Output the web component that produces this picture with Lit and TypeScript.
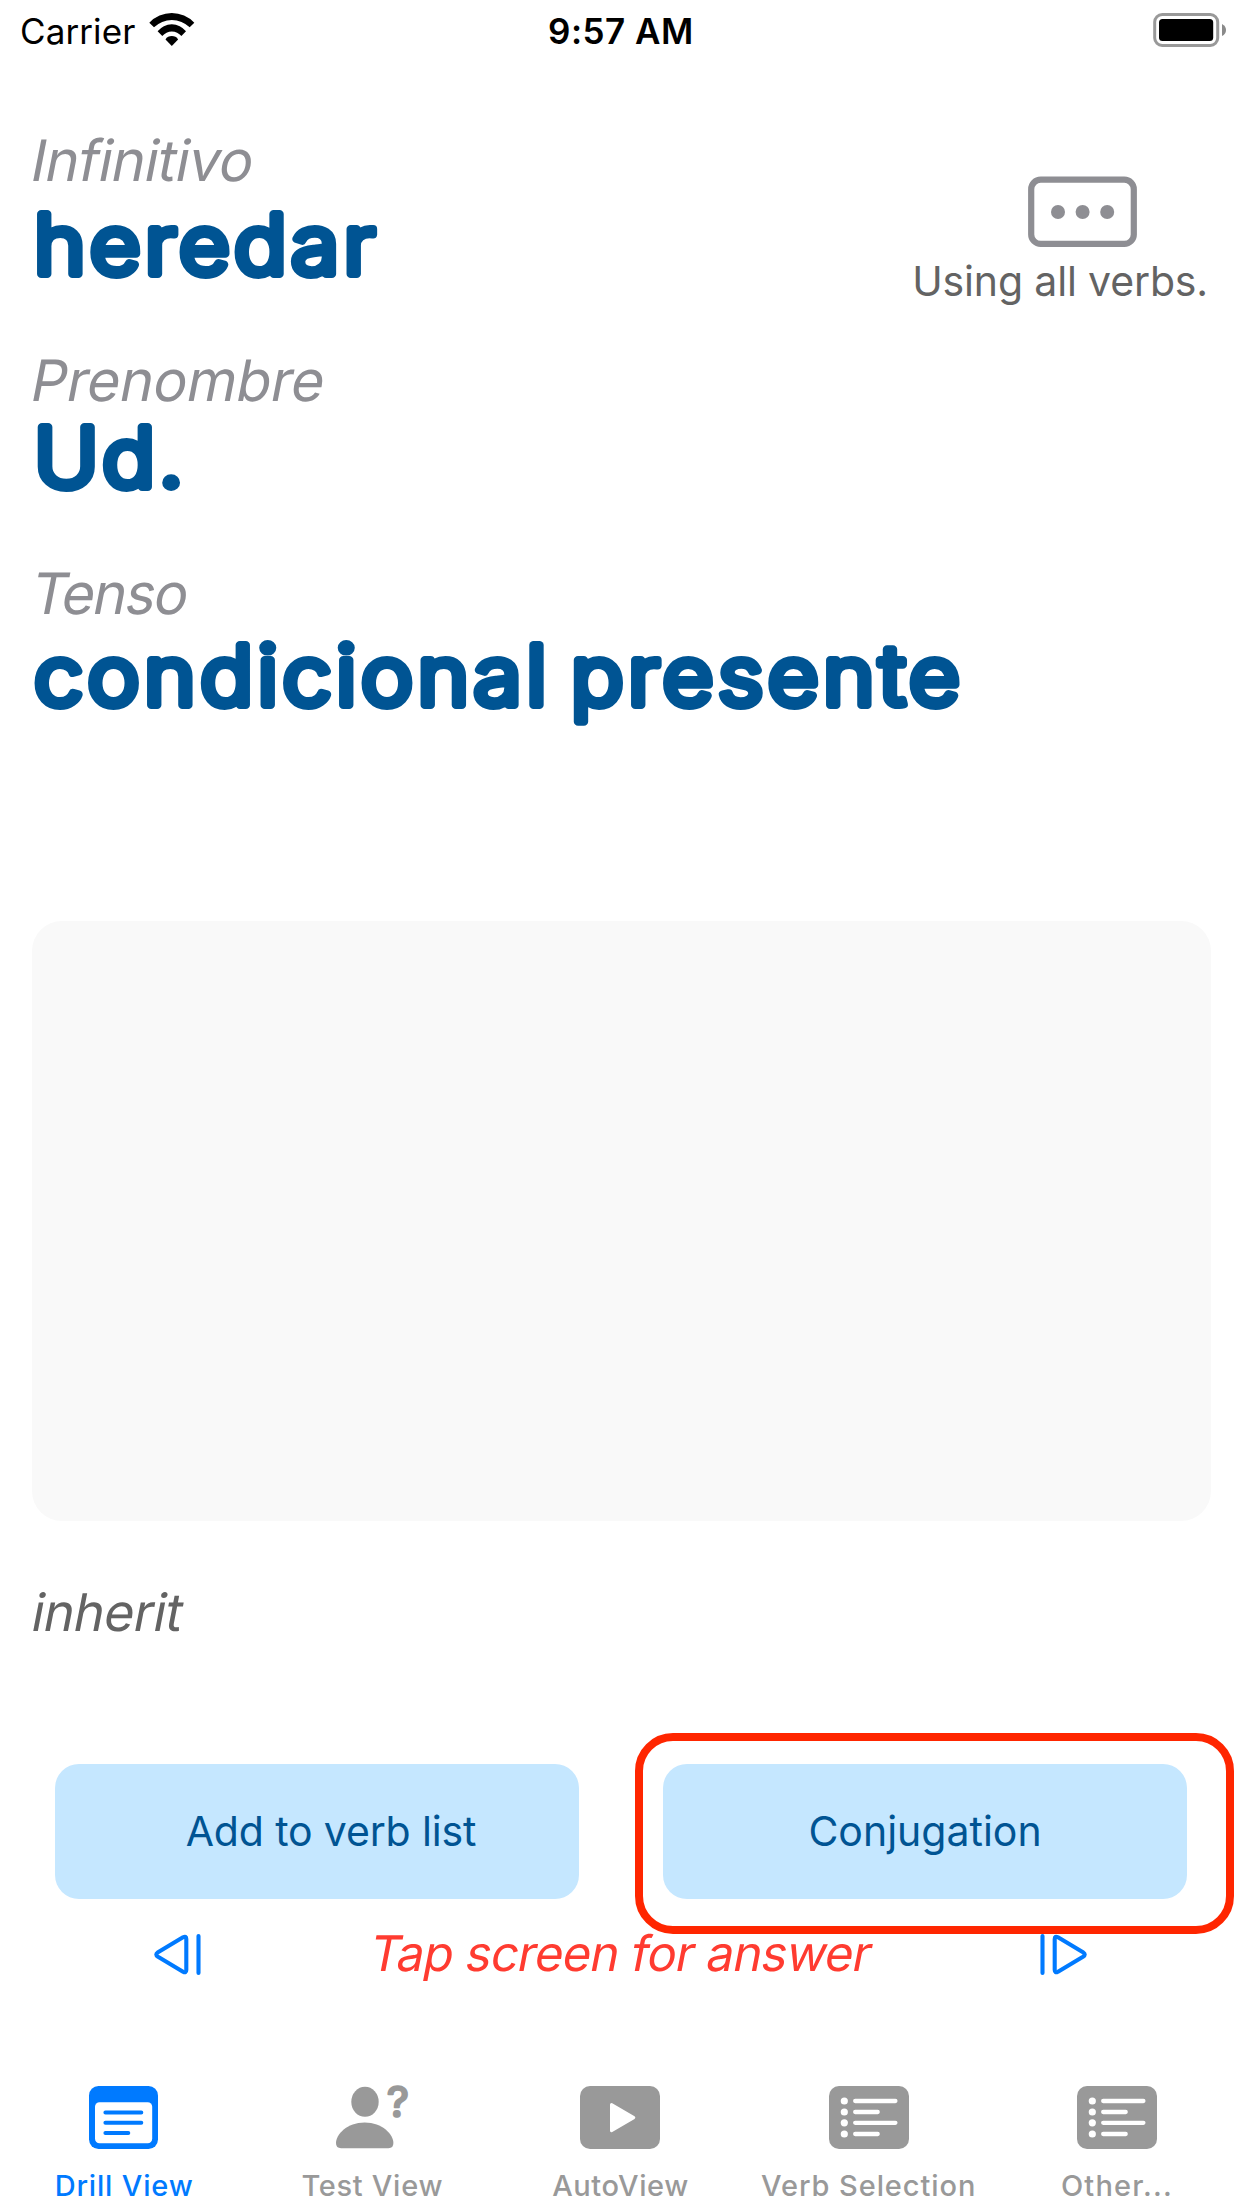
import { LitElement, html, svg, css } from "lit";
import type { SVGTemplateResult } from "lit";
import { customElement, property } from "lit/decorators.js";

const listIcon = svg`
  <rect x="0" y="3" width="80" height="63" rx="10" fill="currentColor" />
  <g fill="#fff">
    <circle cx="15.3" cy="18" r="3.6" /><circle cx="15.3" cy="29" r="3.6" />
    <circle cx="15.3" cy="39.8" r="3.6" /><circle cx="15.3" cy="51" r="3.6" />
  </g>
  <path d="M26.2 18H66.4M26.2 29H48.7M26.2 39.8H66.4M26.2 51H48.7" fill="none" stroke="#fff" stroke-width="4.3" stroke-linecap="round" />`;

const drillIcon = svg`
  <rect x="5" y="3" width="69" height="63" rx="9.5" fill="currentColor" />
  <rect x="11" y="19.3" width="57.2" height="41" rx="4.5" fill="#fff" />
  <path d="M21.4 29.4H57.3M21.4 39.7H57.3M21.4 49.9H44.3" fill="none" stroke="currentColor" stroke-width="4" stroke-linecap="round" />`;

const testIcon = svg`
  <ellipse cx="33" cy="18.8" rx="13.7" ry="15" fill="currentColor" />
  <path d="M4 60C4 51.5 15 39.5 32.7 39.5S61.4 51.5 61.4 60Q61.4 65.2 56.5 65.2H9Q4 65.2 4 60Z" fill="currentColor" />
  <text class="question" x="54.6" y="34">?</text>`;

const playIcon = svg`
  <rect x="0" y="3" width="80" height="63" rx="10" fill="currentColor" />
  <path d="M31.5 21.5L53.8 34.6L31.5 47.8Z" fill="#fff" stroke="#fff" stroke-width="3" stroke-linejoin="round" />`;

interface Prompt { label: string; word: string; kind: string; }

const prompts: Prompt[] = [
  { label: "Infinitivo", word: "heredar", kind: "infinitive" },
  { label: "Prenombre", word: "Ud.", kind: "pronoun" },
  { label: "Tenso", word: "condicional presente", kind: "tense" },
];

interface Tab { label: string; kind: string; icon: SVGTemplateResult; }

const tabs: Tab[] = [
  { label: "Drill View", kind: "drill", icon: drillIcon },
  { label: "Test View", kind: "test", icon: testIcon },
  { label: "AutoView", kind: "auto", icon: playIcon },
  { label: "Verb Selection", kind: "verbs", icon: listIcon },
  { label: "Other...", kind: "other", icon: listIcon },
];

@customElement("status-bar")
export class StatusBar extends LitElement {
  static styles = css`
    :host { display: grid; grid-template-columns: 548px 1fr auto; height: 62px; line-height: 62px; font-size: 35px; color: #000; padding: 0 16px 0 0; }
    .carrier { display: flex; padding-left: 20px; gap: 14px; letter-spacing: 0.1px; }
    .wifi { margin-top: 13px; }
    .time { font-weight: 600; letter-spacing: 0.5px; }
    .battery { margin-top: 13px; }
    svg { display: block; flex: none; }
  `;
  render() {
    return html`
      <div class="carrier">
        <span>Carrier</span>
        <svg class="wifi" width="46" height="34" viewBox="0 0 46 34">
          <path d="M.3 9.7A31 31 0 0 1 45.3 9.7L40.7 14.3A25.5 25.5 0 0 0 5 14.3Z" />
          <path d="M8.6 18.3A17.9 17.9 0 0 1 37 18.3L32.4 23A12.6 12.6 0 0 0 13.3 23Z" />
          <path d="M16.5 26.4A7.4 7.4 0 0 1 29.1 26.4L22.8 33Z" />
        </svg>
      </div>
      <div class="time">9:57 AM</div>
      <svg class="battery" width="73" height="34" viewBox="0 0 73 34">
        <rect x="1.7" y="1.5" width="63" height="31" rx="7.5" fill="none" stroke="#999" stroke-width="3" />
        <rect x="6" y="6" width="54.2" height="22" rx="3.5" />
        <path d="M69 11Q73 13 73 17T69 23Z" fill="#8a8a8a" />
      </svg>`;
  }
}

/* Light letters with a round-joined outline give a bold face with soft ends. */
@customElement("verb-word")
export class VerbWord extends LitElement {
  @property() word = "";
  @property() kind = "";
  static styles = css`
    :host { display: block; height: 90px; }
    svg { display: block; overflow: visible; }
    text { font-family: Inter, sans-serif; font-size: 82px; font-weight: 300; fill: #005493; stroke: #005493; stroke-width: 8px; stroke-linejoin: round; }
    .infinitive { letter-spacing: 3.9px; }
    .pronoun { letter-spacing: 3.4px; }
    .tense { letter-spacing: 4.2px; word-spacing: -9px; }
  `;
  render() {
    return html`<svg width="960" height="90">
      <text class=${this.kind} y="70" transform="scale(1.07 1)">${this.word}</text>
    </svg>`;
  }
}

@customElement("app-root")
export class AppRoot extends LitElement {
  static styles = css`
    :host { display: flex; flex-direction: column; width: 1242px; height: 2208px; overflow: hidden; background: #fff; font-family: Inter, "Liberation Sans", sans-serif; white-space: nowrap; }
    svg { display: block; flex: none; }
    .head { display: grid; grid-template-columns: 1fr auto; height: 795px; padding: 64px 34px 0 28px; }
    .prompts { display: grid; grid-template-rows: 78px 142px 71px 142px 76px 286px; grid-template-columns: 860px; }
    .slant { transform: skewX(-11deg); }
    .label { font-size: 57px; line-height: 70px; color: #8e8e93; transform-origin: 0 56px; }
    .label.infinitive { letter-spacing: -0.75px; }
    .label.pronoun { letter-spacing: -0.4px; }
    .label.tense { letter-spacing: -1.6px; }
    verb-word { padding-left: 6px; }
    .source { display: flex; flex-direction: column; align-items: flex-end; gap: 9px; padding-top: 50px; }
    .source svg { margin-right: 71px; }
    .note { font-size: 41px; line-height: 50px; letter-spacing: -0.15px; color: #636363; }
    .answer { height: 600px; margin: 0 31px 0 32px; border-radius: 30px; background: #f9f9f9; }
    .meaning { margin: 57px 0 0 29px; font-size: 52px; line-height: 70px; letter-spacing: -0.6px; color: #636363; transform-origin: 0 54px; }
    .actions { display: grid; grid-template-columns: 524px 524px; gap: 84px; margin-top: 116px; padding-left: 55px; }
    .action { position: relative; display: flex; align-items: center; justify-content: center; height: 135px; box-sizing: border-box; padding-bottom: 2px; border-radius: 24px; background: #c5e7ff; color: #005493; font-size: 41px; }
    .action.add { padding-left: 28px; letter-spacing: -0.15px; }
    .highlight { position: absolute; left: -28px; top: -31px; width: 599px; height: 201px; box-sizing: border-box; border: 8px solid #ff2600; border-radius: 38px; z-index: 1; }
    .stepper { display: flex; justify-content: space-between; align-items: center; height: 60px; margin-top: 25px; padding: 0 155px 0 154px; color: #007aff; }
    .hint { padding-right: 7px; font-size: 49px; line-height: 60px; letter-spacing: -0.8px; color: #ff3b30; transform-origin: 0 48px; }
    .tabs { display: grid; grid-template-columns: repeat(5, 1fr); margin-top: 99px; padding-right: 1px; }
    .tab { display: flex; flex-direction: column; align-items: center; gap: 15px; color: #999; font-size: 29px; font-weight: 500; line-height: 40px; }
    .tab svg { overflow: visible; }
    .tab.drill { color: #007aff; letter-spacing: 0.82px; }
    .tab.test { letter-spacing: 0.7px; }
    .tab.auto { letter-spacing: 0.57px; }
    .tab.verbs { letter-spacing: 0.92px; }
    .tab.other { letter-spacing: 1.2px; }
    .question { font-size: 43px; font-weight: 500; letter-spacing: 0; fill: currentColor; stroke: currentColor; stroke-width: 1.6px; stroke-linejoin: round; }
  `;
  render() {
    return html`
      <status-bar></status-bar>
      <div class="head">
        <div class="prompts">
          ${prompts.map((p) => html`
            <div class="label slant ${p.kind}">${p.label}</div>
            <verb-word .word=${p.word} .kind=${p.kind}></verb-word>`)}
        </div>
        <div class="source">
          <svg width="109" height="71" viewBox="0 0 109 71">
            <rect x="3.2" y="3.7" width="102.6" height="64.2" rx="9.5" fill="none" stroke="#8e8e93" stroke-width="6.2" />
            <g fill="#8e8e93"><circle cx="30" cy="36" r="7" /><circle cx="54.6" cy="36" r="7" /><circle cx="79.2" cy="36" r="7" /></g>
          </svg>
          <div class="note">Using all verbs.</div>
        </div>
      </div>
      <div class="answer"></div>
      <div class="meaning slant">inherit</div>
      <div class="actions">
        <div class="action add">Add to verb list</div>
        <div class="action">Conjugation<div class="highlight"></div></div>
      </div>
      <div class="stepper">
        <svg width="47" height="41" viewBox="0 0 47 41" fill="none" stroke="currentColor" stroke-width="4.1" stroke-linecap="round" stroke-linejoin="round">
          <path d="M32.3 5V36Q32.3 39.5 29 37.7L4 22.8Q.5 20.5 4 18.2L29 3.3Q32.3 1.5 32.3 5ZM44.5 2.1V38.9" />
        </svg>
        <div class="hint slant">Tap screen for answer</div>
        <svg width="47" height="41" viewBox="0 0 47 41" fill="none" stroke="currentColor" stroke-width="4.1" stroke-linecap="round" stroke-linejoin="round">
          <path d="M14.7 5V36Q14.7 39.5 18 37.7L43 22.8Q46.5 20.5 43 18.2L18 3.3Q14.7 1.5 14.7 5ZM2.5 2.1V38.9" />
        </svg>
      </div>
      <div class="tabs">
        ${tabs.map((t) => html`
          <div class="tab ${t.kind}">
            <svg width="80" height="68" viewBox="0 0 80 68">${t.icon}</svg>
            <span>${t.label}</span>
          </div>`)}
      </div>`;
  }
}
